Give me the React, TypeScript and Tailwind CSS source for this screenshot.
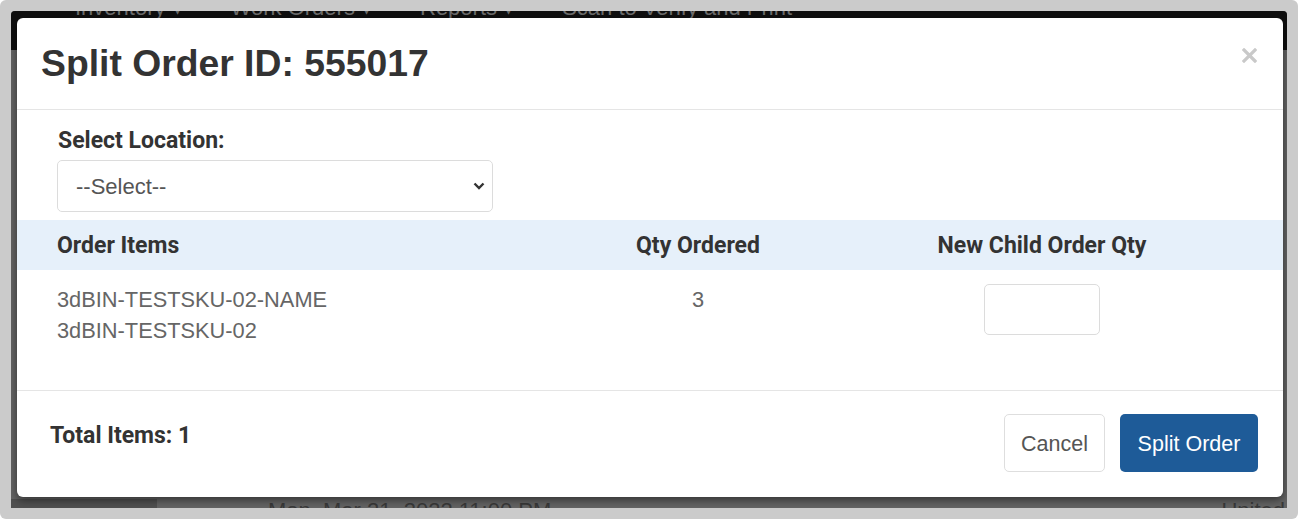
import React from "react";

const navItems = ["Inventory ▾", "Work Orders ▾", "Reports ▾", "Scan to Verify and Print"];

const CloseIcon = () => (
  <svg width="15" height="15" viewBox="0 0 15 15" aria-hidden="true">
    <path d="M2 2L13 13M13 2L2 13" stroke="#c9c9c9" strokeWidth="3.2" strokeLinecap="square" />
  </svg>
);

const Chevron = () => (
  <svg width="12" height="8" viewBox="0 0 12 8" aria-hidden="true">
    <path d="M1.5 1.5L6 6L10.5 1.5" fill="none" stroke="#333" strokeWidth="2.4" />
  </svg>
);

export default function App() {
  return (
    <div className="w-[1298px] h-[519px] bg-white">
      <div className="w-full h-full rounded-[6px] bg-[#cbcbcb] p-[11px]">
        <div className="relative w-full h-full overflow-hidden rounded-t-[4px] bg-[#646464] flex flex-col font-['Liberation_Sans',Arial,sans-serif]">
          {/* Page behind the backdrop */}
          <nav className="h-[39px] bg-[#0f0f0f] shrink-0 overflow-hidden">
            <div className="flex gap-[48px] pl-[64px] -mt-[14px] text-[22px] leading-none text-[#6c6c6c]">
              {navItems.map((item) => (
                <span key={item}>{item}</span>
              ))}
            </div>
          </nav>
          <div className="flex-1" />
          <div className="h-[9px] shrink-0 flex overflow-hidden text-[22px] leading-none text-[#3a3a3a]">
            <div className="w-[146px] bg-[#505050]" />
            <span className="ml-[111px] mt-[1px]">Mon, Mar 21, 2022 11:00 PM</span>
            <span className="ml-auto mr-[2px] mt-[1px]">United</span>
          </div>

          {/* Modal */}
          <div className="absolute left-[6px] top-[7px] w-[1266px] h-[479px] bg-white rounded-[6px] shadow-[0_3px_9px_rgba(0,0,0,0.5)] flex flex-col">
            <div className="h-[92px] border-b border-[#e5e5e5] flex items-center justify-between pl-[24px] pr-[26px]">
              <h4 className="text-[37.3px] font-bold text-[#333] leading-none mt-[1px]">Split Order ID: 555017</h4>
              <button className="-mt-[16px]">
                <CloseIcon />
              </button>
            </div>

            <div className="h-[281px] border-b border-[#e5e5e5] flex flex-col">
              <div className="pl-[40px] pt-[18px]">
                <label className="block pl-[1px] font-['Roboto',sans-serif] font-bold text-[23px] leading-[26px] text-[#333]">
                  Select Location:
                </label>
                <div className="relative mt-[6px] w-[436px] h-[52px]">
                  <select className="appearance-none w-full h-full border border-[#dcdcdc] rounded-[5px] bg-white pl-[18px] text-[22px] text-[#555] outline-none">
                    <option>--Select--</option>
                  </select>
                  <span className="absolute right-[8px] top-[22px] pointer-events-none">
                    <Chevron />
                  </span>
                </div>
              </div>

              <div className="mt-[8px] h-[50px] bg-[#e6f0fa] grid grid-cols-[520px_242px_446px] items-center pl-[40px] pt-[3px] font-['Roboto',sans-serif] font-bold text-[23px] text-[#333]">
                <span>Order Items</span>
                <span className="text-center">Qty Ordered</span>
                <span className="text-center">New Child Order Qty</span>
              </div>

              <div className="grid grid-cols-[520px_242px_446px] pl-[40px] pt-[14px] text-[21.8px] leading-[31px] text-[#666]">
                <div>
                  <div>3dBIN-TESTSKU-02-NAME</div>
                  <div>3dBIN-TESTSKU-02</div>
                </div>
                <div className="text-center">3</div>
                <div className="flex justify-center">
                  <input
                    type="text"
                    className="w-[116px] h-[51px] border border-[#dcdcdc] rounded-[5px] outline-none"
                  />
                </div>
              </div>
            </div>

            <div className="flex-1 flex items-start justify-between pl-[33px] pr-[25px] pt-[23px]">
              <span className="mt-[9px] font-['Roboto',sans-serif] font-bold text-[23px] leading-[26px] text-[#333]">
                Total Items: 1
              </span>
              <div className="flex gap-[15px]">
                <button className="w-[101px] h-[58px] pt-[2px] border border-[#dedede] rounded-[5px] bg-white text-[21.5px] text-[#555]">
                  Cancel
                </button>
                <button className="w-[138px] h-[58px] pt-[2px] rounded-[5px] bg-[#1e5b98] text-[21.5px] text-white">
                  Split Order
                </button>
              </div>
            </div>
          </div>
        </div>
      </div>
    </div>
  );
}
